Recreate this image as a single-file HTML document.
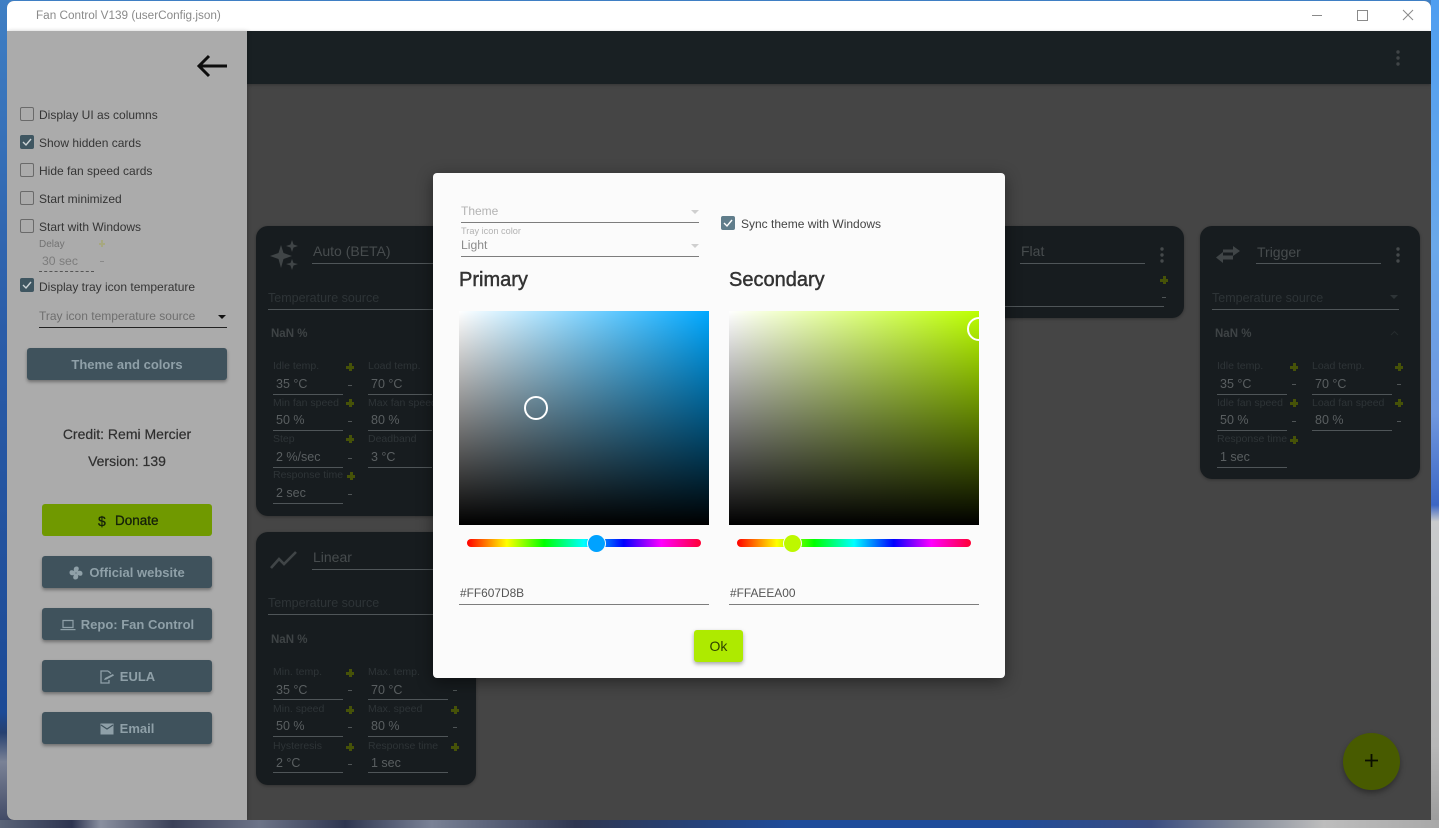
<!DOCTYPE html>
<html><head><meta charset="utf-8">
<style>
html,body{margin:0;padding:0;width:1439px;height:828px;overflow:hidden;font-family:"Liberation Sans",sans-serif}
#bg{position:absolute;left:0;top:0;width:1439px;height:828px;background:linear-gradient(180deg,#3f7fc4 0,#2a5ca8 40%,#1c4a96 86%,#26406f 88.500%,#7a8296 92%,#3b4360 100%)}
#bgr{position:absolute;left:1431px;top:0;width:8px;height:828px;background:linear-gradient(180deg,#4f9ef0 0,#6aa8ea 30%,#6f97de 50%,#3c66c4 61%,#c9cbcc 63%,#b8b8b8 90%,#9a9a9a 100%)}
#bgb{position:absolute;left:0;top:820px;width:1439px;height:8px;background:linear-gradient(90deg,#5a6478 0,#2d3450 5%,#8a90a0 7%,#3a4058 12%,#6d7488 18%,#2e3650 24%,#7a8296 30%,#2e3650 40%,#1f4c9a 55%,#1f4c9a 70%,#3a4c80 80%,#7d8595 86%,#bdbdbd 92%,#a8a8a8 100%)}
.a{position:absolute}
.t{position:absolute;white-space:nowrap;line-height:1}
#win{position:absolute;left:7px;top:1px;width:1424px;height:819px;overflow:hidden;border-radius:7px 7px 0 7px;background:#454545}
#title{position:absolute;left:0;top:0;width:1424px;height:30px;background:#fff}
.ln{position:absolute;height:1px;background:#4f5558}
.mut{color:#2e3437}
.val{color:#5a5f61}
.card{position:absolute;background:#171c1f;border-radius:12px;box-shadow:0 1px 3px rgba(0,0,0,.3)}
.plus{position:absolute;width:8px;height:8px;background:linear-gradient(#465208,#465208) center/8px 3px no-repeat,linear-gradient(#465208,#465208) center/3px 8px no-repeat}
.min{position:absolute;width:4px;height:1px;background:#505557}
.cb{position:absolute;width:12px;height:12px;border:1px solid #6a6a6a;border-radius:2px}
.cbc{position:absolute;width:14px;height:14px;background:#3f5661;border-radius:2px}
.btn{position:absolute;background:#3f525c;border-radius:3px;box-shadow:0 2px 3px rgba(0,0,0,.35);color:#8fa0a8;font-weight:bold;font-size:13px;text-align:center}
.sel{position:absolute;width:0;height:0;border-left:4px solid transparent;border-right:4px solid transparent;border-top:4px solid #2e3437}
</style></head><body>
<div id="bg"></div><div id="bgr"></div><div id="bgb"></div>
<div id="win">
 <div id="title">
  <div class="t" style="left:29px;top:9px;font-size:11.750px;color:#8a8a8a">Fan Control V139 (userConfig.json)</div>
  <div class="a" style="left:1305px;top:14px;width:10px;height:1px;background:#8a8a8a"></div>
  <div class="a" style="left:1350px;top:9px;width:9px;height:9px;border:1px solid #8a8a8a"></div>
  <svg class="a" style="left:1395px;top:8px" width="12" height="12"><path d="M1 1L11 11M11 1L1 11" stroke="#8a8a8a" stroke-width="1" fill="none"/></svg>
 </div>
 <!-- app bar -->
 <div class="a" style="left:240px;top:30px;width:1184px;height:53px;background:#192023;box-shadow:0 1px 3px rgba(0,0,0,.25)"></div>
 <svg class="a" style="left:1388px;top:48px" width="6" height="18"><circle cx="3" cy="3" r="1.700" fill="#404547"/><circle cx="3" cy="9" r="1.700" fill="#404547"/><circle cx="3" cy="15" r="1.700" fill="#404547"/></svg>

 <!-- Auto card -->
 <div class="card" style="left:249px;top:225px;width:220px;height:290px">
  <svg class="a" style="left:13px;top:13px" width="32" height="32" viewBox="0 0 32 32"><path d="M12 6L14.500 14L23 17L14.500 20L12 29L9.500 20L1 17L9.500 14Z" fill="#404547"/><path d="M23 1L24.500 5.500L29 7L24.500 8.500L23 13L21.500 8.500L17 7L21.500 5.500Z" fill="#404547"/><path d="M23 20L24.500 24L29 25L24.500 26.500L23 31L21.500 26.500L17 25L21.500 24Z" fill="#404547"/></svg>
  <div class="t" style="left:57px;top:18px;font-size:14px;color:#474c4e">Auto (BETA)</div>
  <div class="ln" style="left:56px;top:37px;width:164px"></div>
  <div class="t mut" style="left:12px;top:66px;font-size:12.500px">Temperature source</div>
  <div class="ln" style="left:12px;top:83px;width:208px"></div>
  <div class="t" style="left:15px;top:103px;font-size:11.500px;font-weight:bold;color:#3e4345">NaN %</div>
  <div class="t mut" style="left:17px;top:135px;font-size:10.500px">Idle temp.</div><div class="plus" style="left:90px;top:137px"></div>
  <div class="t val" style="left:20px;top:152px;font-size:12.500px">35 °C</div><div class="min" style="left:92px;top:159px"></div><div class="ln" style="left:17px;top:168px;width:70px"></div>
  <div class="t mut" style="left:112px;top:135px;font-size:10.500px">Load temp.</div>
  <div class="t val" style="left:115px;top:152px;font-size:12.500px">70 °C</div><div class="ln" style="left:112px;top:168px;width:64px"></div>
  <div class="t mut" style="left:17px;top:172px;font-size:10.500px">Min fan speed</div><div class="plus" style="left:90px;top:173px"></div>
  <div class="t val" style="left:20px;top:188px;font-size:12.500px">50 %</div><div class="min" style="left:92px;top:195px"></div><div class="ln" style="left:17px;top:204px;width:70px"></div>
  <div class="t mut" style="left:112px;top:172px;font-size:10.500px">Max fan speed</div>
  <div class="t val" style="left:115px;top:188px;font-size:12.500px">80 %</div><div class="ln" style="left:112px;top:204px;width:64px"></div>
  <div class="t mut" style="left:17px;top:208px;font-size:10.500px">Step</div><div class="plus" style="left:90px;top:209px"></div>
  <div class="t val" style="left:20px;top:225px;font-size:12.500px">2 %/sec</div><div class="min" style="left:92px;top:232px"></div><div class="ln" style="left:17px;top:241px;width:70px"></div>
  <div class="t mut" style="left:112px;top:208px;font-size:10.500px">Deadband</div>
  <div class="t val" style="left:115px;top:225px;font-size:12.500px">3 °C</div><div class="ln" style="left:112px;top:241px;width:64px"></div>
  <div class="t mut" style="left:17px;top:244px;font-size:10.500px">Response time</div><div class="plus" style="left:91px;top:246px"></div>
  <div class="t val" style="left:20px;top:261px;font-size:12.500px">2 sec</div><div class="min" style="left:92px;top:268px"></div><div class="ln" style="left:17px;top:277px;width:70px"></div>
 </div>

 <!-- Linear card -->
 <div class="card" style="left:249px;top:531px;width:220px;height:253px">
  <svg class="a" style="left:14px;top:18px" width="28" height="20" viewBox="0 0 28 20"><path d="M1 18L9 9L14 14L26 2" stroke="#404547" stroke-width="2.600" fill="none"/></svg>
  <div class="t" style="left:57px;top:18px;font-size:14px;color:#474c4e">Linear</div>
  <div class="ln" style="left:56px;top:37px;width:164px"></div>
  <div class="t mut" style="left:12px;top:65px;font-size:12.500px">Temperature source</div>
  <div class="ln" style="left:12px;top:82px;width:208px"></div>
  <div class="t" style="left:15px;top:103px;font-size:11.500px;font-weight:bold;color:#3e4345">NaN %</div>
  <div class="t mut" style="left:17px;top:135px;font-size:10.500px">Min. temp.</div><div class="plus" style="left:90px;top:137px"></div>
  <div class="t val" style="left:20px;top:152px;font-size:12.500px">35 °C</div><div class="min" style="left:92px;top:158px"></div><div class="ln" style="left:17px;top:167px;width:70px"></div>
  <div class="t mut" style="left:112px;top:135px;font-size:10.500px">Max. temp.</div><div class="plus" style="left:195px;top:137px"></div>
  <div class="t val" style="left:115px;top:152px;font-size:12.500px">70 °C</div><div class="min" style="left:197px;top:158px"></div><div class="ln" style="left:112px;top:167px;width:80px"></div>
  <div class="t mut" style="left:17px;top:172px;font-size:10.500px">Min. speed</div><div class="plus" style="left:90px;top:174px"></div>
  <div class="t val" style="left:20px;top:188px;font-size:12.500px">50 %</div><div class="min" style="left:92px;top:195px"></div><div class="ln" style="left:17px;top:204px;width:70px"></div>
  <div class="t mut" style="left:112px;top:172px;font-size:10.500px">Max. speed</div><div class="plus" style="left:195px;top:174px"></div>
  <div class="t val" style="left:115px;top:188px;font-size:12.500px">80 %</div><div class="min" style="left:197px;top:195px"></div><div class="ln" style="left:112px;top:204px;width:80px"></div>
  <div class="t mut" style="left:17px;top:209px;font-size:10.500px">Hysteresis</div><div class="plus" style="left:90px;top:211px"></div>
  <div class="t val" style="left:20px;top:225px;font-size:12.500px">2 °C</div><div class="min" style="left:92px;top:232px"></div><div class="ln" style="left:17px;top:240px;width:70px"></div>
  <div class="t mut" style="left:112px;top:209px;font-size:10.500px">Response time</div><div class="plus" style="left:195px;top:211px"></div>
  <div class="t val" style="left:115px;top:225px;font-size:12.500px">1 sec</div><div class="ln" style="left:112px;top:240px;width:80px"></div>
 </div>

 <!-- Flat card -->
 <div class="card" style="left:957px;top:225px;width:220px;height:92px">
  <div class="t" style="left:57px;top:18px;font-size:14px;color:#474c4e">Flat</div>
  <div class="ln" style="left:56px;top:37px;width:125px"></div>
  <svg class="a" style="left:195px;top:20px" width="6" height="18"><circle cx="3" cy="3" r="1.700" fill="#45494b"/><circle cx="3" cy="9" r="1.700" fill="#45494b"/><circle cx="3" cy="15" r="1.700" fill="#45494b"/></svg>
  <div class="plus" style="left:196px;top:50px"></div>
  <div class="min" style="left:198px;top:71px"></div>
  <div class="ln" style="left:20px;top:80px;width:180px"></div>
 </div>

 <!-- Trigger card -->
 <div class="card" style="left:1193px;top:225px;width:220px;height:253px">
  <svg class="a" style="left:15px;top:19px" width="26" height="20" viewBox="0 0 26 20"><path d="M8 4.500H18V1L25 6L18 11V7.500H8Z" fill="#404547"/><path d="M18 10.500H8V7L1 12.500L8 18V14.500H18Z" fill="#404547"/></svg>
  <div class="t" style="left:57px;top:19px;font-size:14px;color:#474c4e">Trigger</div>
  <div class="ln" style="left:56px;top:37px;width:125px"></div>
  <svg class="a" style="left:195px;top:20px" width="6" height="18"><circle cx="3" cy="3" r="1.700" fill="#45494b"/><circle cx="3" cy="9" r="1.700" fill="#45494b"/><circle cx="3" cy="15" r="1.700" fill="#45494b"/></svg>
  <div class="t mut" style="left:12px;top:66px;font-size:12.500px">Temperature source</div>
  <div class="sel" style="left:190px;top:69px"></div>
  <div class="ln" style="left:12px;top:83px;width:187px"></div>
  <div class="t" style="left:15px;top:103px;font-size:11.500px;font-weight:bold;color:#3e4345">NaN %</div>
  <svg class="a" style="left:190px;top:104px" width="9" height="6"><path d="M1 5L4.500 1.500L8 5" stroke="#262b2e" stroke-width="1" fill="none"/></svg>
  <div class="t mut" style="left:17px;top:135px;font-size:10.500px">Idle temp.</div><div class="plus" style="left:90px;top:137px"></div>
  <div class="t val" style="left:20px;top:152px;font-size:12.500px">35 °C</div><div class="min" style="left:92px;top:158px"></div><div class="ln" style="left:17px;top:168px;width:70px"></div>
  <div class="t mut" style="left:112px;top:135px;font-size:10.500px">Load temp.</div><div class="plus" style="left:195px;top:137px"></div>
  <div class="t val" style="left:115px;top:152px;font-size:12.500px">70 °C</div><div class="min" style="left:197px;top:158px"></div><div class="ln" style="left:112px;top:168px;width:80px"></div>
  <div class="t mut" style="left:17px;top:172px;font-size:10.500px">Idle fan speed</div><div class="plus" style="left:90px;top:173px"></div>
  <div class="t val" style="left:20px;top:188px;font-size:12.500px">50 %</div><div class="min" style="left:92px;top:195px"></div><div class="ln" style="left:17px;top:204px;width:70px"></div>
  <div class="t mut" style="left:112px;top:172px;font-size:10.500px">Load fan speed</div><div class="plus" style="left:195px;top:173px"></div>
  <div class="t val" style="left:115px;top:188px;font-size:12.500px">80 %</div><div class="min" style="left:197px;top:195px"></div><div class="ln" style="left:112px;top:204px;width:80px"></div>
  <div class="t mut" style="left:17px;top:208px;font-size:10.500px">Response time</div><div class="plus" style="left:90px;top:210px"></div>
  <div class="t val" style="left:20px;top:225px;font-size:12.500px">1 sec</div><div class="ln" style="left:17px;top:241px;width:70px"></div>
 </div>

 <!-- FAB -->
 <div class="a" style="left:1336px;top:732px;width:57px;height:57px;border-radius:50%;background:#485b00;box-shadow:0 3px 6px rgba(0,0,0,.35)"></div>
 <svg class="a" style="left:1357px;top:752px" width="15" height="15"><path d="M7.500 1V14M1 7.500H14" stroke="#0a0e01" stroke-width="1.800" fill="none"/></svg>

 <!-- Sidebar -->
 <div class="a" style="left:0;top:30px;width:240px;height:789px;background:#ababab;border-bottom-left-radius:7px;box-shadow:1px 0 4px rgba(0,0,0,.2)">
  <svg class="a" style="left:190px;top:23px" width="32" height="24" viewBox="0 0 32 24"><path d="M30 12H3M12 2L2 12L12 22" stroke="#0d0d0d" stroke-width="3" fill="none"/></svg>

  <div class="cb" style="left:13px;top:76px"></div><div class="t" style="left:32px;top:78px;font-size:12px;color:#353535">Display UI as columns</div>
  <div class="cbc" style="left:13px;top:104px"><svg width="14" height="14"><path d="M3 7L6 10L11 4" stroke="#ccd3d6" stroke-width="1.400" fill="none"/></svg></div><div class="t" style="left:32px;top:106px;font-size:12px;color:#353535">Show hidden cards</div>
  <div class="cb" style="left:13px;top:132px"></div><div class="t" style="left:32px;top:134px;font-size:12px;color:#353535">Hide fan speed cards</div>
  <div class="cb" style="left:13px;top:160px"></div><div class="t" style="left:32px;top:162px;font-size:12px;color:#353535">Start minimized</div>
  <div class="cb" style="left:13px;top:188px"></div><div class="t" style="left:32px;top:190px;font-size:12px;color:#353535">Start with Windows</div>
  <div class="t" style="left:32px;top:209px;font-size:10px;color:#727272">Delay</div>
  <div class="a" style="left:92px;top:209px;width:6px;height:7px;background:linear-gradient(#a7a880,#a7a880) center/6px 2px no-repeat,linear-gradient(#a7a880,#a7a880) center/2px 7px no-repeat"></div>
  <div class="t" style="left:35px;top:224px;font-size:12.200px;color:#7c7c7c">30 sec</div>
  <div class="a" style="left:93px;top:230px;width:4px;height:1px;background:#8a8a8a"></div>
  <div class="a" style="left:32px;top:240px;width:55px;height:0;border-top:1px dashed #555"></div>
  <div class="cbc" style="left:13px;top:247px"><svg width="14" height="14"><path d="M3 7L6 10L11 4" stroke="#ccd3d6" stroke-width="1.400" fill="none"/></svg></div><div class="t" style="left:32px;top:250px;font-size:12px;color:#353535">Display tray icon temperature</div>
  <div class="t" style="left:32px;top:279px;font-size:12px;color:#6f6f6f">Tray icon temperature source</div>
  <div class="sel" style="left:211px;top:284px;border-top-color:#111"></div>
  <div class="a" style="left:32px;top:296px;width:188px;height:1px;background:#222"></div>

  <div class="btn" style="left:20px;top:317px;width:200px;height:32px;line-height:33px">Theme and colors</div>
  <div class="t" style="left:0;width:240px;text-align:center;top:396px;font-size:14px;color:#2f2f2f;-webkit-text-stroke:.2px #2f2f2f">Credit: Remi Mercier</div>
  <div class="t" style="left:0;width:240px;text-align:center;top:423px;font-size:14px;color:#2f2f2f;-webkit-text-stroke:.2px #2f2f2f">Version: 139</div>

  <div class="a" style="left:35px;top:473px;width:170px;height:32px;border-radius:3px;background:#709900">
   <div class="t" style="left:56px;top:10px;font-size:14px;color:#14200a;-webkit-text-stroke:.3px #14200a">$</div>
   <div class="t" style="left:73px;top:10px;font-size:13.500px;color:#14200a;-webkit-text-stroke:.3px #14200a">Donate</div>
  </div>

  <div class="btn" style="left:35px;top:525px;width:170px;height:32px;line-height:33px"><svg style="vertical-align:-3px;margin-right:6px" width="14" height="14" viewBox="0 0 14 14"><path d="M6.500 6.500C4 5.500 4 0.500 7.500 0.500C11 0.500 10 5 7.500 6.500ZM7.500 6.500C8.500 4 13.500 4 13.500 7.500C13.500 11 9 10 7.500 7.500ZM7.500 7.500C10 8.500 10 13.500 6.500 13.500C3 13.500 4 9 6.500 7.500ZM6.500 7.500C5.500 10 0.500 10 0.500 6.500C0.500 3 5 4 6.500 6.500Z" fill="#8fa0a8"/></svg>Official website</div>
  <div class="btn" style="left:35px;top:577px;width:170px;height:32px;line-height:33px"><svg style="vertical-align:-2px;margin-right:5px" width="16" height="12" viewBox="0 0 16 12"><path d="M3 1.500H13V8.500H3Z" stroke="#8fa0a8" stroke-width="1.200" fill="none"/><path d="M0.500 10H15.500V11.200H0.500Z" fill="#8fa0a8"/></svg>Repo: Fan Control</div>
  <div class="btn" style="left:35px;top:629px;width:170px;height:32px;line-height:33px"><svg style="vertical-align:-3px;margin-right:5px" width="16" height="14" viewBox="0 0 16 14"><path d="M9 1H2V13H10V10M9 1L12 3.500" stroke="#8fa0a8" stroke-width="1.300" fill="none"/><path d="M5 10L6 8L14 4L15 5.500L7.500 9.500Z" fill="#8fa0a8"/></svg>EULA</div>
  <div class="btn" style="left:35px;top:681px;width:170px;height:32px;line-height:33px"><svg style="vertical-align:-2px;margin-right:6px" width="14" height="12" viewBox="0 0 14 12"><path d="M0.500 0.500H13.500V11.500H0.500Z" fill="#8fa0a8"/><path d="M1 2L7 6L13 2" stroke="#3f525c" stroke-width="1.200" fill="none"/></svg>Email</div>
 </div>

 <!-- Dialog -->
 <div class="a" style="left:426px;top:172px;width:572px;height:505px;background:#fbfbfb;border-radius:4px;box-shadow:0 4px 16px rgba(0,0,0,.45)">
  <div class="t" style="left:28px;top:32px;font-size:12px;color:#b3b3b3">Theme</div>
  <div class="sel" style="left:258px;top:37px;border-top-color:#cfcfcf"></div>
  <div class="a" style="left:28px;top:49px;width:238px;height:1px;background:#7d7d7d"></div>
  <div class="t" style="left:28px;top:54px;font-size:9.200px;color:#b3b3b3">Tray icon color</div>
  <div class="t" style="left:28px;top:66px;font-size:12.200px;color:#8c8c8c">Light</div>
  <div class="sel" style="left:258px;top:71px;border-top-color:#cfcfcf"></div>
  <div class="a" style="left:28px;top:83px;width:238px;height:1px;background:#7d7d7d"></div>
  <div class="cbc" style="left:288px;top:43px;background:#607d8b"><svg width="14" height="14"><path d="M3 7L6 10L11 4" stroke="#fff" stroke-width="1.400" fill="none"/></svg></div>
  <div class="t" style="left:308px;top:45px;font-size:12px;color:#444">Sync theme with Windows</div>

  <div class="t" style="left:26px;top:97px;font-size:20px;color:#333;-webkit-text-stroke:.45px #333">Primary</div>
  <div class="t" style="left:296px;top:97px;font-size:20px;color:#333;-webkit-text-stroke:.45px #333">Secondary</div>

  <div class="a" style="left:26px;top:138px;width:250px;height:214px;background:linear-gradient(180deg,rgba(0,0,0,0),#000),linear-gradient(90deg,#fff,#00a8ff);overflow:hidden">
   <div class="a" style="left:65px;top:85px;width:20px;height:20px;border:2px solid #fff;border-radius:50%"></div>
  </div>
  <div class="a" style="left:296px;top:138px;width:250px;height:214px;background:linear-gradient(180deg,rgba(0,0,0,0),#000),linear-gradient(90deg,#fff,#bcff00);overflow:hidden">
   <div class="a" style="left:238px;top:6px;width:20px;height:20px;border:2px solid #fff;border-radius:50%"></div>
  </div>

  <div class="a" style="left:34px;top:366px;width:234px;height:8px;border-radius:4px;background:linear-gradient(90deg,#f00,#ff0 17%,#0f0 33%,#0ff 50%,#00f 67%,#f0f 83%,#f03)"></div>
  <div class="a" style="left:155px;top:362px;width:17px;height:17px;border-radius:50%;background:#00a2ff;box-shadow:0 0 0 1px #fbfbfb"></div>
  <div class="a" style="left:304px;top:366px;width:234px;height:8px;border-radius:4px;background:linear-gradient(90deg,#f00,#ff0 17%,#0f0 33%,#0ff 50%,#00f 67%,#f0f 83%,#f03)"></div>
  <div class="a" style="left:351px;top:362px;width:17px;height:17px;border-radius:50%;background:#bdf800;box-shadow:0 0 0 1px #fbfbfb"></div>

  <div class="t" style="left:27px;top:415px;font-size:11.900px;color:#555">#FF607D8B</div>
  <div class="a" style="left:26px;top:431px;width:250px;height:1px;background:#7d7d7d"></div>
  <div class="t" style="left:297px;top:415px;font-size:11.900px;color:#555">#FFAEEA00</div>
  <div class="a" style="left:296px;top:431px;width:250px;height:1px;background:#7d7d7d"></div>

  <div class="a" style="left:261px;top:457px;width:49px;height:32px;line-height:32px;text-align:center;background:#aeea00;border-radius:3px;box-shadow:0 2px 4px rgba(0,0,0,.35);font-size:14px;color:#2f4300">Ok</div>
 </div>
</div>
</body></html>
